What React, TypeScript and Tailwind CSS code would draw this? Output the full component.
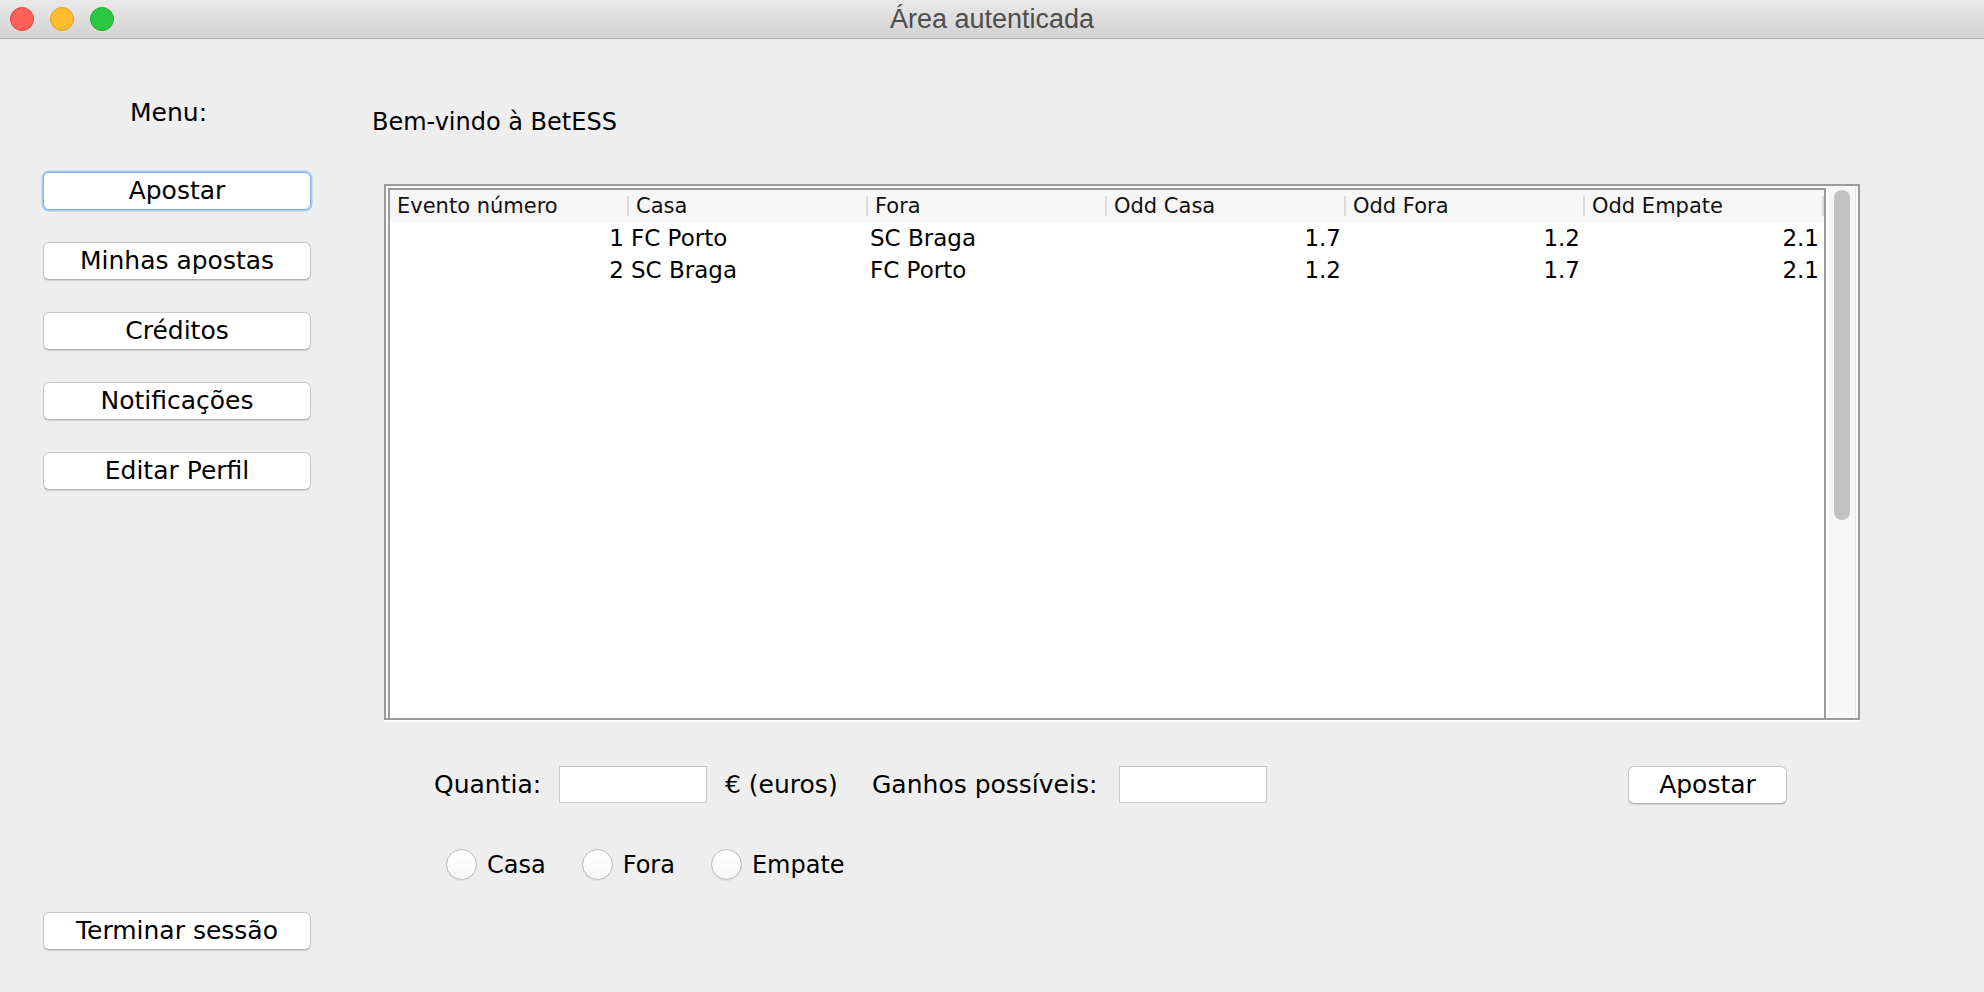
import React from 'react';

interface Evento {
  id: number;
  casa: string;
  fora: string;
  oddCasa: string;
  oddFora: string;
  oddEmpate: string;
}

const eventos: Evento[] = [
  { id: 1, casa: 'FC Porto', fora: 'SC Braga', oddCasa: '1.7', oddFora: '1.2', oddEmpate: '2.1' },
  { id: 2, casa: 'SC Braga', fora: 'FC Porto', oddCasa: '1.2', oddFora: '1.7', oddEmpate: '2.1' },
];

const colunas = ['Evento número', 'Casa', 'Fora', 'Odd Casa', 'Odd Fora', 'Odd Empate'];

const menu = ['Minhas apostas', 'Créditos', 'Notificações', 'Editar Perfil'];

function AquaButton({ label, focused = false, width = 'w-[268px]' }: { label: string; focused?: boolean; width?: string }) {
  return (
    <button
      className={`${width} h-[38px] shrink-0 rounded-[6px] bg-white text-[25px] leading-[30px] text-black flex items-center justify-center ${
        focused
          ? 'border border-[#7fb0f0] shadow-[0_0_0_1.5px_#a9cbf6]'
          : 'border border-[#c8c8c8] border-b-[#b3b3b3] shadow-[0_1px_1px_rgba(0,0,0,0.12)]'
      }`}
    >
      {label}
    </button>
  );
}

function Radio({ label }: { label: string }) {
  return (
    <label className="flex items-center gap-[10px]">
      <span className="w-[31px] h-[31px] rounded-full border border-[#b9b9b9] bg-gradient-to-b from-white to-[#f7f7f7] shadow-[0_1px_1px_rgba(0,0,0,0.06)]" />
      <span className="text-[24px] leading-[30px] text-black">{label}</span>
    </label>
  );
}

export default function App() {
  return (
    <div className="w-[1984px] h-[992px] flex flex-col bg-[#eeeeee] overflow-hidden font-[family-name:'DejaVu_Sans',sans-serif]">
      {/* Title bar */}
      <div className="h-[39px] shrink-0 flex items-center border-b border-[#b4b4b4] bg-gradient-to-b from-[#e9e9e9] to-[#d2d2d2]">
        <div className="flex items-center gap-[16px] pl-[10px]">
          <span className="w-[24px] h-[24px] rounded-full bg-[#fe5f57] border border-[#e1453e]" />
          <span className="w-[24px] h-[24px] rounded-full bg-[#febc2e] border border-[#dfa023]" />
          <span className="w-[24px] h-[24px] rounded-full bg-[#2ac840] border border-[#1eab2c]" />
        </div>
        <div className="flex-1 flex justify-center pr-[114px]">
          <span className="text-[27px] leading-[32px] text-[#4d4d4d] font-[family-name:'Liberation_Sans',sans-serif]">
            Área autenticada
          </span>
        </div>
      </div>

      {/* Body */}
      <div className="flex-1 flex">
        {/* Sidebar */}
        <aside className="w-[311px] shrink-0 pl-[43px] pt-[59px] pb-[42px] flex flex-col">
          <div className="h-[30px] pl-[87px] text-[25px] leading-[30px] text-black">Menu:</div>
          <div className="mt-[44px] flex flex-col gap-[32px]">
            <AquaButton label="Apostar" focused />
            {menu.map((m) => (
              <AquaButton key={m} label={m} />
            ))}
          </div>
          <div className="mt-auto">
            <AquaButton label="Terminar sessão" />
          </div>
        </aside>

        {/* Main */}
        <main className="flex-1 pl-[61px] pt-[68px] flex flex-col">
          <div className="h-[30px] text-[24px] leading-[30px] text-black">Bem-vindo à BetESS</div>

          {/* Table scroll pane */}
          <div className="mt-[47px] ml-[12px] w-[1476px] h-[536px] border-2 border-[#9b9b9b] bg-white flex shadow-[0_2px_0_#ffffff]">
            <div className="w-[1440px] pl-[2px] pt-[2px]">
              <div className="h-full border-l-2 border-t-2 border-r-2 border-[#9b9b9b] bg-white">
                <div className="grid grid-cols-[repeat(6,239px)] h-[32px] bg-[#f6f6f6]">
                  {colunas.map((c) => (
                    <div key={c} className="flex items-center">
                      <span className="flex-1 pl-[7px] text-[21px] leading-[26px] text-[#111] whitespace-nowrap">{c}</span>
                      <span className="w-[2px] h-[20px] bg-[#dadada]" />
                    </div>
                  ))}
                </div>
                {eventos.map((e) => (
                  <div key={e.id} className="grid grid-cols-[repeat(6,239px)] h-[32px] text-[23px] leading-[28px] text-black">
                    <div className="flex items-center justify-end pr-[5px]">{e.id}</div>
                    <div className="flex items-center pl-[2px] whitespace-nowrap">{e.casa}</div>
                    <div className="flex items-center pl-[2px] whitespace-nowrap">{e.fora}</div>
                    <div className="flex items-center justify-end pr-[5px]">{e.oddCasa}</div>
                    <div className="flex items-center justify-end pr-[5px]">{e.oddFora}</div>
                    <div className="flex items-center justify-end pr-[5px]">{e.oddEmpate}</div>
                  </div>
                ))}
              </div>
            </div>
            {/* Scrollbar */}
            <div className="w-[32px] flex bg-white">
              <div className="w-[2px]" />
              <div className="w-[27px] bg-[#f7f7f7] pt-[4px] pl-[6px]">
                <div className="w-[16px] h-[330px] rounded-full bg-[#c2c2c2]" />
              </div>
              <div className="w-[1px] bg-[#e4e4e4]" />
              <div className="w-[2px] bg-[#fafafa]" />
            </div>
          </div>

          {/* Amount row */}
          <div className="mt-[45px] ml-[62px] h-[39px] flex items-center text-[25px] leading-[30px] text-black">
            <span className="w-[125px] whitespace-nowrap">Quantia:</span>
            <input className="w-[148px] h-[37px] bg-white border border-[#cbcbcb] border-t-[#bdbdbd] outline-none" />
            <span className="ml-[18px] w-[147px] whitespace-nowrap">€ (euros)</span>
            <span className="w-[247px] whitespace-nowrap">Ganhos possíveis:</span>
            <input className="w-[148px] h-[37px] bg-white border border-[#cbcbcb] border-t-[#bdbdbd] outline-none" />
            <div className="ml-[361px]">
              <AquaButton label="Apostar" width="w-[159px]" />
            </div>
          </div>

          {/* Radio row */}
          <div className="mt-[45px] ml-[74px] flex items-center gap-[36px]">
            <Radio label="Casa" />
            <Radio label="Fora" />
            <Radio label="Empate" />
          </div>
        </main>
      </div>
    </div>
  );
}
